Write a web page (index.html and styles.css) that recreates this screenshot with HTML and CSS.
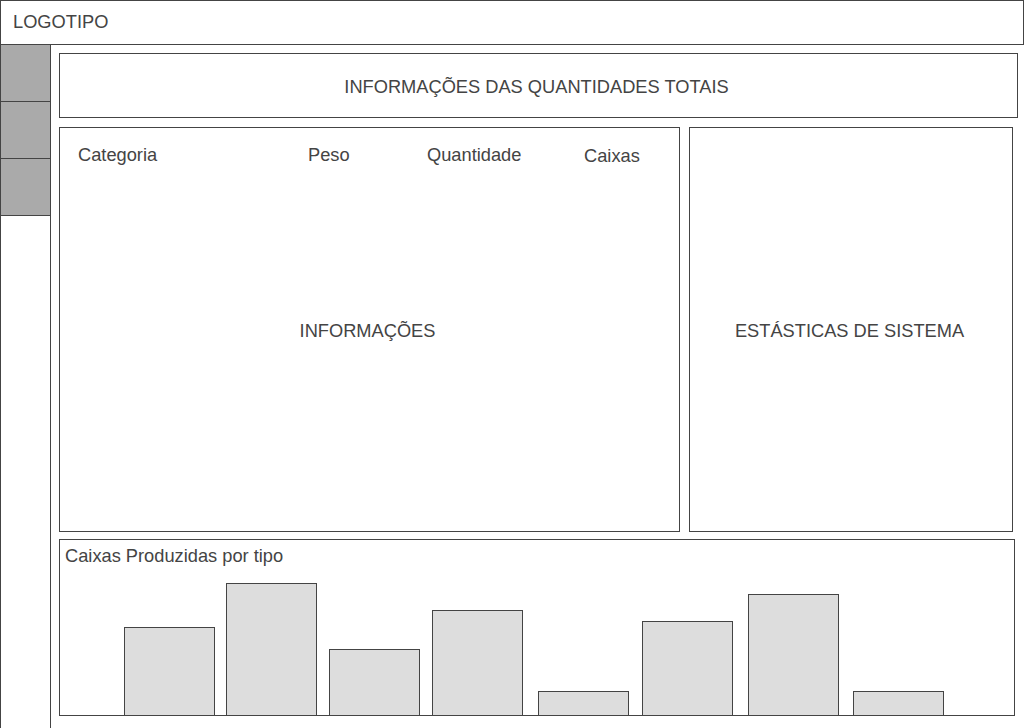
FILE: index.html
```html
<!DOCTYPE html>
<html lang="pt">
<head>
<meta charset="utf-8">
<title>Dashboard</title>
<link rel="stylesheet" href="styles.css">
</head>
<body>
<header class="topbar">LOGOTIPO</header>
<div class="layout">
  <nav class="sidebar">
    <div class="nav-item"></div>
    <div class="nav-item"></div>
    <div class="nav-item"></div>
  </nav>
  <main class="main">
    <section class="totals">INFORMAÇÕES DAS QUANTIDADES TOTAIS</section>
    <div class="row">
      <section class="info">
        <div class="cols">
          <span>Categoria</span>
          <span>Peso</span>
          <span>Quantidade</span>
          <span class="col-low">Caixas</span>
        </div>
        <div class="info-label">INFORMAÇÕES</div>
      </section>
      <section class="stats">ESTÁSTICAS DE SISTEMA</section>
    </div>
    <section class="chart">
      <div class="chart-title">Caixas Produzidas por tipo</div>
      <div class="bars">
        <div class="bar" style="height:89px"></div>
        <div class="bar" style="height:133px"></div>
        <div class="bar" style="height:67px"></div>
        <div class="bar" style="height:106px"></div>
        <div class="bar" style="height:25px"></div>
        <div class="bar" style="height:95px"></div>
        <div class="bar" style="height:122px"></div>
        <div class="bar" style="height:25px"></div>
      </div>
    </section>
  </main>
</div>
</body>
</html>
```

FILE: styles.css
```css
* { box-sizing: border-box; }

html, body {
  margin: 0;
  padding: 0;
}

body {
  width: 1024px;
  height: 728px;
  overflow: hidden;
  background: #fff;
  font-family: "Liberation Sans", Arial, sans-serif;
  font-size: 18.25px;
  line-height: 21px;
  color: #444;
}

.topbar {
  height: 45px;
  width: 1024px;
  border: 1px solid #444;
  padding-left: 12px;
  padding-bottom: 2px;
  display: flex;
  align-items: center;
}

.layout {
  display: flex;
  height: 683px;
}

.sidebar {
  width: 51px;
  flex: 0 0 51px;
  border-left: 1px solid #444;
  border-right: 1px solid #444;
  display: flex;
  flex-direction: column;
}

.nav-item {
  height: 57px;
  background: #aaa;
  border-bottom: 1px solid #444;
}

.main {
  padding: 8px 0 0 8px;
  display: flex;
  flex-direction: column;
}

.totals {
  width: 959px;
  height: 65px;
  border: 1px solid #444;
  display: flex;
  align-items: center;
  justify-content: center;
  padding-top: 2px;
  padding-right: 4px;
}

.row {
  display: flex;
  gap: 9px;
  margin-top: 9px;
}

.info {
  width: 621px;
  height: 405px;
  border: 1px solid #444;
  display: grid;
}

.cols {
  grid-area: 1 / 1;
  align-self: start;
  display: grid;
  grid-template-columns: 230px 119px 157px auto;
  padding: 16px 0 0 18px;
}

.col-low {
  padding-top: 1px;
}

.info-label {
  grid-area: 1 / 1;
  align-self: center;
  justify-self: center;
  padding-top: 1px;
  margin-right: 4px;
}

.stats {
  width: 324px;
  height: 405px;
  border: 1px solid #444;
  display: flex;
  align-items: center;
  justify-content: center;
  padding-top: 1px;
  padding-right: 3px;
}

.chart {
  margin-top: 7px;
  width: 956px;
  height: 177px;
  border: 1px solid #444;
  display: flex;
  flex-direction: column;
}

.chart-title {
  padding: 5px 0 0 5px;
}

.bars {
  flex: 1;
  display: flex;
  align-items: flex-end;
  gap: 11px;
  padding-left: 64px;
  margin-bottom: -1px;
}

.bar {
  flex: 0 0 91px;
  width: 91px;
  background: #ddd;
  border: 1px solid #444;
}

.bar:nth-child(3) { margin-left: 1px; }
.bar:nth-child(4) { margin-left: 1px; }
.bar:nth-child(5) { margin-left: 4px; }
.bar:nth-child(6) { margin-left: 2px; }
.bar:nth-child(7) { margin-left: 4px; }
.bar:nth-child(8) { margin-left: 3px; }
```
